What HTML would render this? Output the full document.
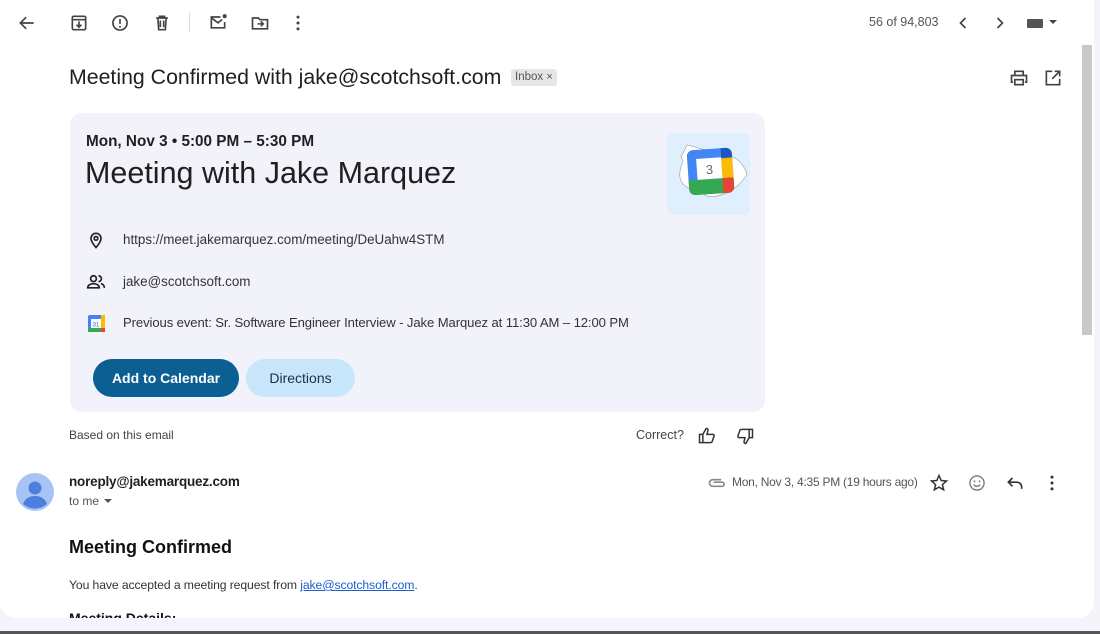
<!DOCTYPE html>
<html><head><meta charset="utf-8">
<style>
*{margin:0;padding:0;box-sizing:border-box}
body{width:1100px;height:634px;overflow:hidden;background:#f4f5fb;font-family:"Liberation Sans",Arial,sans-serif;color:#1f1f1f;position:relative}
.panel{position:absolute;left:0;top:0;width:1094px;height:618px;background:#fff;border-radius:0 0 16px 16px}
.bottom{position:absolute;left:0;top:631px;width:1100px;height:3px;background:#555}
.abs{position:absolute}
svg{display:block}
.ic{position:absolute;width:20px;height:20px}
.card{position:absolute;left:70px;top:113px;width:695px;height:299px;background:#f1f2fa;border-radius:12px}
.t{position:absolute;white-space:nowrap}
.scroll{position:absolute;left:1082px;top:45px;width:10px;height:290px;background:#c8c8c8}
</style></head><body>
<div class="panel"></div>
<div class="bottom"></div>
<div class="scroll"></div>

<svg class="ic" style="left:17px;top:13px" viewBox="0 0 24 24"><path d="M20 12H5M11 5l-7 7 7 7" fill="none" stroke="#444" stroke-width="2"/></svg>
<svg class="ic" style="left:69px;top:13px" viewBox="0 0 24 24"><rect x="4" y="4" width="16" height="16" rx="1.5" fill="none" stroke="#444" stroke-width="2"/><path d="M4 8h16M12 10v7M9 14l3 3 3-3" fill="none" stroke="#444" stroke-width="2"/></svg>
<svg class="ic" style="left:110px;top:13px" viewBox="0 0 24 24"><circle cx="12" cy="12" r="8.5" fill="none" stroke="#444" stroke-width="2"/><path d="M12 7v6" stroke="#444" stroke-width="2"/><circle cx="12" cy="16.5" r="1.2" fill="#444"/></svg>
<svg class="ic" style="left:152px;top:13px" viewBox="0 0 24 24"><path d="M5 6h14M9 6V4h6v2M7 6l1 14h8l1-14M10 9v8M14 9v8" fill="none" stroke="#444" stroke-width="2"/></svg>
<div class="abs" style="left:189px;top:12px;width:1px;height:20px;background:#ddd"></div>
<svg class="ic" style="left:208px;top:12px" viewBox="0 0 24 24"><path d="M15 6H4v13h16v-7" fill="none" stroke="#444" stroke-width="2"/><path d="M4 7l8 6 5-4" fill="none" stroke="#444" stroke-width="2"/><circle cx="20" cy="5" r="2.5" fill="#444"/></svg>
<svg class="ic" style="left:250px;top:13px" viewBox="0 0 24 24"><path d="M3 6h7l2 2h9v11H3z" fill="none" stroke="#444" stroke-width="2"/><path d="M9 13h7M13 10l3 3-3 3" fill="none" stroke="#444" stroke-width="1.8"/></svg>
<svg class="ic" style="left:288px;top:13px" viewBox="0 0 24 24"><circle cx="12" cy="5" r="1.8" fill="#444"/><circle cx="12" cy="12" r="1.8" fill="#444"/><circle cx="12" cy="19" r="1.8" fill="#444"/></svg>

<div class="t" style="left:869px;top:15px;font-size:12.5px;color:#555">56 of 94,803</div>
<svg class="ic" style="left:953px;top:13px" viewBox="0 0 24 24"><path d="M15 6l-6 6 6 6" fill="none" stroke="#444" stroke-width="2"/></svg>
<svg class="ic" style="left:990px;top:13px" viewBox="0 0 24 24"><path d="M9 6l6 6-6 6" fill="none" stroke="#444" stroke-width="2"/></svg>
<div class="abs" style="left:1027px;top:19px;width:16px;height:9px;background:#555;border-radius:1px"></div>
<div class="abs" style="left:1049px;top:20px;width:0;height:0;border-left:4px solid transparent;border-right:4px solid transparent;border-top:4px solid #444"></div>

<div class="t" style="left:69px;top:65px;font-size:21.3px;color:#1f1f1f">Meeting Confirmed with jake@scotchsoft.com</div>
<div class="t" style="left:511px;top:69px;height:17px;padding:0 4px;font-size:11.5px;line-height:17px;color:#555;background:#e6e6e6;border-radius:3px">Inbox <span style="font-size:11px">×</span></div>
<svg class="ic" style="left:1009px;top:68px" viewBox="0 0 24 24"><path d="M7 8V4h10v4M5 17H3V9h18v8h-2" fill="none" stroke="#444" stroke-width="2"/><rect x="7" y="14" width="10" height="6" fill="none" stroke="#444" stroke-width="2"/></svg>
<svg class="ic" style="left:1043px;top:68px" viewBox="0 0 24 24"><path d="M11 4H4v16h16v-7M14 4h6v6M20 4l-9 9" fill="none" stroke="#444" stroke-width="2"/></svg>

<div class="card"></div>
<div class="t" style="left:86px;top:133px;font-size:15.3px;font-weight:bold;color:#1f1f1f">Mon, Nov 3 • 5:00 PM – 5:30 PM</div>
<div class="t" style="left:85px;top:156px;font-size:30.5px;color:#1f1f1f">Meeting with Jake Marquez</div>
<div class="abs" style="left:667px;top:133px;width:83px;height:82px;background:#e0effd;border-radius:6px"></div>
<svg class="abs" style="left:667px;top:133px" width="83" height="82" viewBox="0 0 83 82">
<path d="M16 28c-4 10-6 20 4 26 6 4 14 2 18 8 6 4 16 0 22-2 8-4 12-8 20-18-2-8-6-14-14-18L20 12l-6 12z" fill="#fff" stroke="#999" stroke-width="0.6"/>
<g transform="rotate(-4 43 38)">
<rect x="21" y="16" width="45" height="45" rx="6" fill="#4285f4"/>
<path d="M21 46h45v9a6 6 0 0 1-6 6H27a6 6 0 0 1-6-6z" fill="#34a853"/>
<path d="M55 16h5a6 6 0 0 1 6 6v24H55z" fill="#fbbc04"/>
<path d="M55 16h5a6 6 0 0 1 6 6v4H55z" fill="#1a57c4"/>
<path d="M55 46h11v9a6 6 0 0 1-6 6h-5z" fill="#ea4335"/>
<rect x="30" y="25" width="25" height="21" fill="#fff"/>
<text x="42.5" y="41" font-size="13" text-anchor="middle" fill="#666" font-family="Liberation Sans">3</text>
</g>
</svg>

<svg class="ic" style="left:86px;top:230px" viewBox="0 0 24 24"><path d="M12 21s-6-6.5-6-11a6 6 0 0 1 12 0c0 4.5-6 11-6 11z" fill="none" stroke="#222" stroke-width="2"/><circle cx="12" cy="10" r="2.2" fill="none" stroke="#222" stroke-width="2"/></svg>
<div class="t" style="left:123px;top:232px;font-size:13.4px;color:#333">https://meet.jakemarquez.com/meeting/DeUahw4STM</div>
<svg class="ic" style="left:86px;top:272px" viewBox="0 0 24 24"><circle cx="9" cy="8" r="3.5" fill="none" stroke="#222" stroke-width="2"/><path d="M2 19c0-3 3-5 7-5s7 2 7 5zM15 4.5a3.5 3.5 0 0 1 0 7M18 14c2 .5 4 2 4 5" fill="none" stroke="#222" stroke-width="2"/></svg>
<div class="t" style="left:123px;top:274px;font-size:13.4px;color:#333">jake@scotchsoft.com</div>
<svg class="ic" style="left:87px;top:314px" viewBox="0 0 20 20"><rect x="1" y="1" width="17" height="17" rx="2" fill="#4285f4"/><rect x="1" y="14" width="17" height="4" fill="#34a853"/><rect x="14" y="1" width="4" height="17" fill="#fbbc04"/><rect x="14" y="14" width="4" height="4" fill="#ea4335"/><rect x="4" y="5" width="10" height="9" fill="#fff"/><text x="9" y="12.5" font-size="6" text-anchor="middle" fill="#1a73e8" font-family="Liberation Sans">31</text></svg>
<div class="t" style="left:123px;top:315px;font-size:13.1px;letter-spacing:-0.1px;color:#333">Previous event: Sr. Software Engineer Interview - Jake Marquez at 11:30 AM – 12:00 PM</div>

<div class="t" style="left:93px;top:359px;width:146px;height:38px;border-radius:19px;background:#0b5f93;color:#fff;font-size:14px;font-weight:bold;text-align:center;line-height:38px">Add to Calendar</div>
<div class="t" style="left:246px;top:359px;width:109px;height:38px;border-radius:19px;background:#c7e6fb;color:#1f2f3f;font-size:14px;text-align:center;line-height:38px">Directions</div>

<div class="t" style="left:69px;top:428px;font-size:12px;color:#444">Based on this email</div>
<div class="t" style="left:636px;top:428px;font-size:12.5px;color:#444">Correct?</div>
<svg class="ic" style="left:697px;top:426px" viewBox="0 0 24 24"><path d="M3 10h4v10H3zM7 10l4-7c2 0 2.5 1.5 2 3l-1 4h7c1 0 2 1 1.5 2l-2.5 7c-.3 1-1 1-2 1H7" fill="none" stroke="#333" stroke-width="1.8"/></svg>
<svg class="ic" style="left:735px;top:426px" viewBox="0 0 24 24"><path d="M21 14h-4V4h4zM17 14l-4 7c-2 0-2.5-1.5-2-3l1-4H5c-1 0-2-1-1.5-2L6 5c.3-1 1-1 2-1h9" fill="none" stroke="#333" stroke-width="1.8"/></svg>

<svg class="abs" style="left:16px;top:473px" width="38" height="38" viewBox="0 0 38 38"><circle cx="19" cy="19" r="19" fill="#a8c4f7"/><circle cx="19" cy="15" r="6.5" fill="#4c7fe0"/><path d="M7 31c2-6 7-8 12-8s10 2 12 8a18 18 0 0 1-24 0z" fill="#4c7fe0"/></svg>
<div class="t" style="left:69px;top:474px;font-size:13.5px;font-weight:bold;letter-spacing:-0.2px;color:#1f1f1f">noreply@jakemarquez.com</div>
<div class="t" style="left:69px;top:494px;font-size:12px;color:#555">to me</div>
<div class="abs" style="left:104px;top:499px;border-left:4px solid transparent;border-right:4px solid transparent;border-top:4px solid #555"></div>

<svg class="ic" style="left:707px;top:473px" viewBox="0 0 24 24"><path d="M17 8H7a4 4 0 0 0 0 8h11a2.5 2.5 0 0 0 0-5H8" fill="none" stroke="#888" stroke-width="2"/></svg>
<div class="t" style="left:732px;top:475px;font-size:12px;letter-spacing:-0.25px;color:#555">Mon, Nov 3, 4:35 PM (19 hours ago)</div>
<svg class="ic" style="left:929px;top:473px" viewBox="0 0 24 24"><path d="M12 3l2.6 6 6.4.6-4.9 4.3 1.5 6.3L12 16.9 6.4 20.2l1.5-6.3L3 9.6 9.4 9z" fill="none" stroke="#333" stroke-width="1.8"/></svg>
<svg class="ic" style="left:967px;top:473px" viewBox="0 0 24 24"><circle cx="12" cy="12" r="8.5" fill="none" stroke="#777" stroke-width="1.6"/><circle cx="9" cy="10" r="1.1" fill="#777"/><circle cx="15" cy="10" r="1.1" fill="#777"/><path d="M8 14c2 2.5 6 2.5 8 0" fill="none" stroke="#777" stroke-width="1.6"/></svg>
<svg class="ic" style="left:1005px;top:473px" viewBox="0 0 24 24"><path d="M9 6L4 11l5 5M4 11h10c3 0 6 2 6 6v2" fill="none" stroke="#333" stroke-width="2"/></svg>
<svg class="ic" style="left:1042px;top:473px" viewBox="0 0 24 24"><circle cx="12" cy="5" r="1.8" fill="#333"/><circle cx="12" cy="12" r="1.8" fill="#333"/><circle cx="12" cy="19" r="1.8" fill="#333"/></svg>

<div class="t" style="left:69px;top:537px;font-size:18px;font-weight:bold;color:#111">Meeting Confirmed</div>
<div class="t" style="left:69px;top:578px;font-size:12.2px;letter-spacing:-0.1px;color:#333">You have accepted a meeting request from <span style="color:#1a5fd0;text-decoration:underline">jake@scotchsoft.com</span>.</div>
<div class="abs" style="left:0;top:610px;width:1094px;height:8px;overflow:hidden"><div class="t" style="left:69px;top:0;font-size:14px;font-weight:bold;color:#111">Meeting Details:</div></div>
</body></html>
